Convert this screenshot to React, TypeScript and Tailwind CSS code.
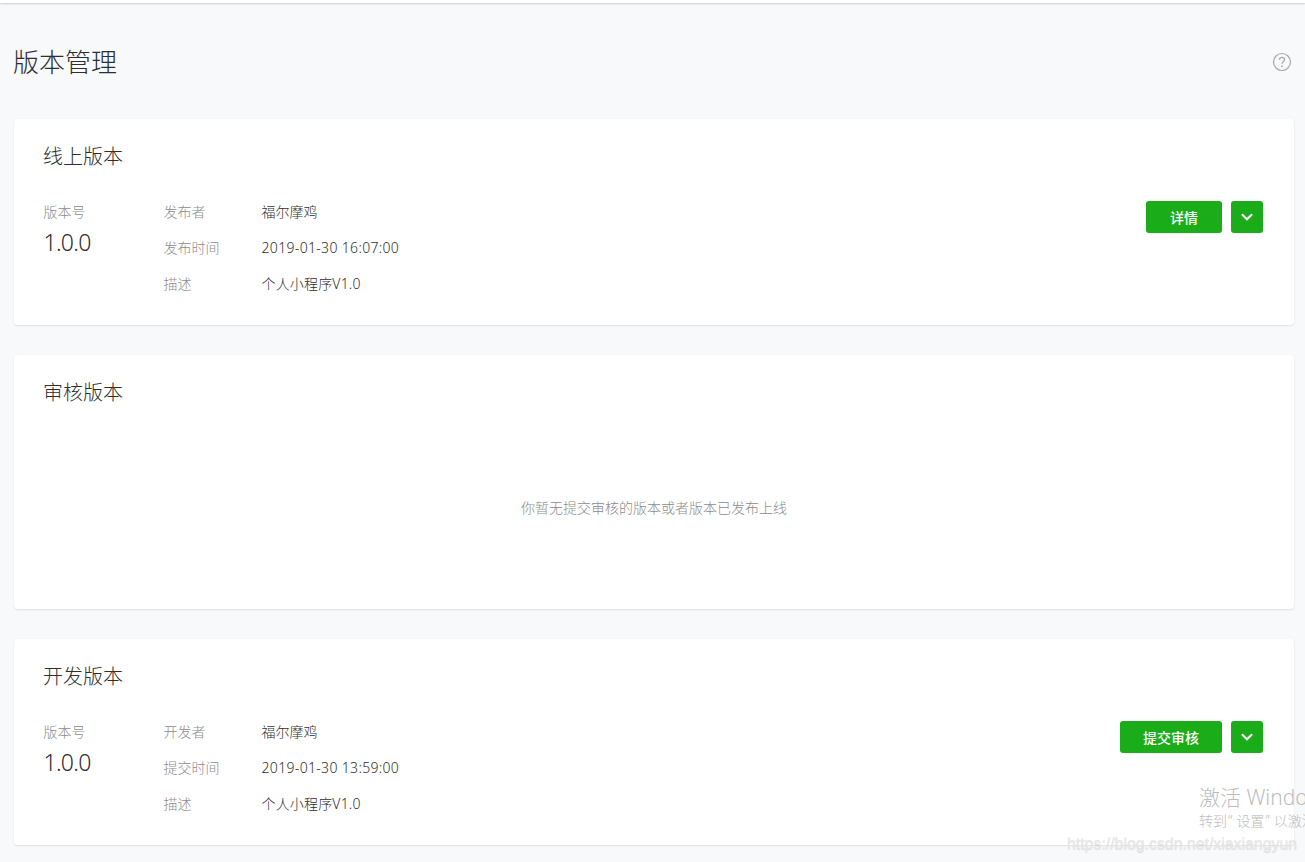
import React from "react";

const FONT = '"Noto Sans","Noto Sans CJK SC",sans-serif';

function Chevron() {
  return (
    <svg width="12" height="8" viewBox="0 0 12 8" fill="none">
      <path d="M0.9 1.3 L6 6.2 L11.1 1.3" stroke="#fff" strokeWidth="2.2" />
    </svg>
  );
}

function Version(props: {
  rows: [string, string][];
  action: string;
  actionWidth: string;
}) {
  return (
    <div className="flex items-start pl-[29.5px] pr-[31px] pt-[21px]">
      <div className="w-[120px] shrink-0">
        <div className="h-[36px] mt-[1px] leading-[36px] text-[14px] font-light text-[#8c8c8c]">版本号</div>
        <div className="text-[23px] leading-[24px] tracking-[-0.7px] font-light text-[#2e2e2e]">1.0.0</div>
      </div>
      <div className="flex-1">
        {props.rows.map(([k, v], i) => (
          <div key={k} className="flex h-[36px] items-center text-[14px] font-light">
            <div className="w-[98px] text-[#8c8c8c]">{k}</div>
            <div
              className={
                i === 1
                  ? "text-[#2e2e2e] tracking-[0.33px]"
                  : i === 2
                    ? "text-[#2e2e2e] tracking-[0.17px]"
                    : "text-[#2e2e2e]"
              }
            >
              {v}
            </div>
          </div>
        ))}
      </div>
      <div className="flex gap-[9px] mt-[8px]">
        <button className={`${props.actionWidth} h-[32px] rounded-[3px] bg-[#1aad19] text-white text-[14px] font-medium`}>
          {props.action}
        </button>
        <button className="w-[32px] h-[32px] rounded-[3px] bg-[#1aad19] flex items-center justify-center">
          <Chevron />
        </button>
      </div>
    </div>
  );
}

function Card(props: { title: string; className: string; children: React.ReactNode }) {
  return (
    <section className={`bg-white rounded-[4px] shadow-[0_1px_2px_rgba(0,0,0,0.1)] ${props.className}`}>
      <h2 className="pl-[29px] pt-[23px] text-[20px] leading-[30px] font-light text-[#2e2e2e]">{props.title}</h2>
      {props.children}
    </section>
  );
}

export default function App() {
  return (
    <div
      className="relative h-[862px] w-[1305px] overflow-hidden bg-[#f8f9fb]"
      style={{ fontFamily: FONT }}
    >
      <div className="h-[3px] bg-white shadow-[0_1px_2px_rgba(0,0,0,0.18)]" />
      <header className="flex items-center justify-between pl-[13px] pr-[13px] pt-[39px] pb-[37px] h-[116px]">
        <h1 className="text-[26px] leading-[40px] font-light text-[#2e2e2e]">版本管理</h1>
        <svg width="20" height="20" viewBox="0 0 20 20" fill="none">
          <circle cx="10" cy="10" r="8.5" stroke="#a8a8a8" strokeWidth="1.2" />
          <path
            d="M7.4 7.8 C7.4 6.2 8.6 5.3 10 5.3 C11.5 5.3 12.6 6.2 12.6 7.6 C12.6 9.4 10 9.5 10 11.8"
            stroke="#a8a8a8"
            strokeWidth="1.2"
          />
          <circle cx="10" cy="14.2" r="0.9" fill="#a8a8a8" />
        </svg>
      </header>
      <main className="flex flex-col gap-[30px] pl-[14px] w-[1294px]">
        <Card title="线上版本" className="h-[206px]">
          <Version
            rows={[
              ["发布者", "福尔摩鸡"],
              ["发布时间", "2019-01-30 16:07:00"],
              ["描述", "个人小程序V1.0"],
            ]}
            action="详情"
            actionWidth="w-[76px]"
          />
        </Card>
        <Card title="审核版本" className="h-[254px]">
          <p className="pt-[90px] text-center text-[14px] leading-[20px] font-light text-[#8c8c8c]">
            你暂无提交审核的版本或者版本已发布上线
          </p>
        </Card>
        <Card title="开发版本" className="h-[206px]">
          <Version
            rows={[
              ["开发者", "福尔摩鸡"],
              ["提交时间", "2019-01-30 13:59:00"],
              ["描述", "个人小程序V1.0"],
            ]}
            action="提交审核"
            actionWidth="w-[102px]"
          />
        </Card>
      </main>
      <div className="absolute left-[1199px] top-[783px] w-[106px] overflow-hidden whitespace-nowrap font-light text-[#bdbdbd]">
        <div className="text-[21px] leading-[28px]">激活 Windows</div>
        <div className="text-[14px] leading-[20px]">
          转到<span className="ml-[1px] mr-[4px]">“</span>设置<span className="ml-[1px] mr-[4px]">”</span>以激活 Windows。
        </div>
      </div>
      <div className="absolute left-[1067px] top-[834px] whitespace-nowrap text-[16px] leading-[20px] tracking-[-0.06px] text-[#e8e8e8] [text-shadow:0_1px_1px_rgba(0,0,0,0.12)]" style={{ fontFamily: '"Liberation Sans",sans-serif' }}>
        https://blog.csdn.net/xiaxiangyun
      </div>
    </div>
  );
}
